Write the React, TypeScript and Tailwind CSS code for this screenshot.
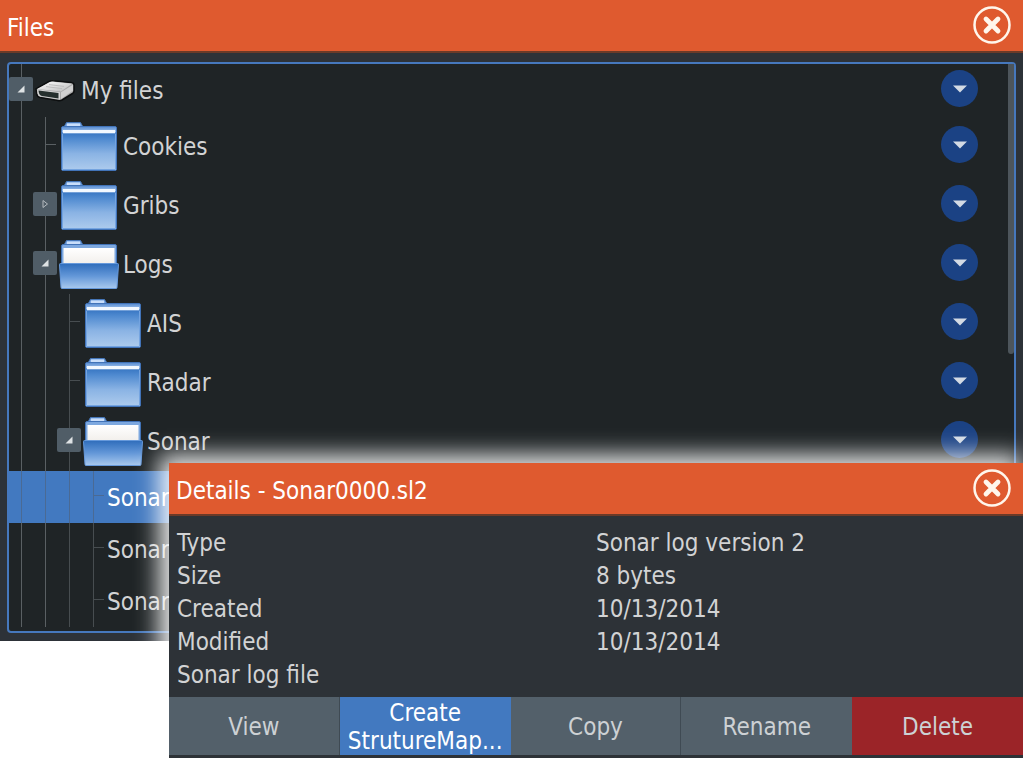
import React from "react";

interface TreeItem {
  id: string;
  label: string;
  depth: number;
  kind: "drive" | "folder" | "openFolder" | "file";
  toggle?: "open" | "closed";
  selected?: boolean;
}

const treeItems: TreeItem[] = [
  { id: "root", label: "My files", depth: 0, kind: "drive", toggle: "open" },
  { id: "cookies", label: "Cookies", depth: 1, kind: "folder" },
  { id: "gribs", label: "Gribs", depth: 1, kind: "folder", toggle: "closed" },
  { id: "logs", label: "Logs", depth: 1, kind: "openFolder", toggle: "open" },
  { id: "ais", label: "AIS", depth: 2, kind: "folder" },
  { id: "radar", label: "Radar", depth: 2, kind: "folder" },
  { id: "sonar", label: "Sonar", depth: 2, kind: "openFolder", toggle: "open" },
  { id: "sonar-0", label: "Sonar", depth: 3, kind: "file", selected: true },
  { id: "sonar-1", label: "Sonar", depth: 3, kind: "file" },
  { id: "sonar-2", label: "Sonar", depth: 3, kind: "file" },
];

const details = [
  { name: "Type", value: "Sonar log version 2" },
  { name: "Size", value: "8 bytes" },
  { name: "Created", value: "10/13/2014" },
  { name: "Modified", value: "10/13/2014" },
];

const rowHeights = {
  drive: "h-[53px]",
  folder: "h-[59px]",
  openFolder: "h-[59px]",
  file: "h-[52px]",
};

// Shared gradients, referenced by id from the icons
function IconDefs() {
  return (
    <svg width="0" height="0" className="absolute" aria-hidden="true">
      <defs>
        <linearGradient id="folderFront" x1="0" y1="0" x2="0" y2="1">
          <stop offset="0" stopColor="#3a78c4" />
          <stop offset="0.15" stopColor="#4f8ad0" />
          <stop offset="0.55" stopColor="#8ab3e4" />
          <stop offset="1" stopColor="#adcbed" />
        </linearGradient>
        <linearGradient id="folderTop" x1="0" y1="0" x2="0" y2="1">
          <stop offset="0" stopColor="#5c8fd2" />
          <stop offset="1" stopColor="#a5c6ef" />
        </linearGradient>
        <linearGradient id="openFront" x1="0" y1="0" x2="0" y2="1">
          <stop offset="0" stopColor="#2f6dbb" />
          <stop offset="0.5" stopColor="#6397d8" />
          <stop offset="1" stopColor="#a9c9ee" />
        </linearGradient>
        <linearGradient id="paper" x1="0" y1="0" x2="0" y2="1">
          <stop offset="0" stopColor="#ffffff" />
          <stop offset="1" stopColor="#f1eeea" />
        </linearGradient>
        <linearGradient id="driveTop" x1="0" y1="0" x2="1" y2="1">
          <stop offset="0" stopColor="#ffffff" />
          <stop offset="1" stopColor="#b9b9b9" />
        </linearGradient>
      </defs>
    </svg>
  );
}

function FolderIcon() {
  return (
    <svg width="60" height="50" viewBox="0 0 60 50" aria-hidden="true">
      <path d="M4.5 6 L7.5 0.5 H21.5 L24.5 6 Z" fill="#7ba7e1" stroke="#4576b8" />
      <path d="M8 3 H21" stroke="#c9defa" strokeWidth="3" />
      <rect x="2.5" y="4.5" width="55" height="44" rx="1.5" fill="url(#folderTop)" stroke="#4173b8" />
      <rect x="3" y="5" width="54" height="5" fill="url(#folderTop)" />
      <rect x="4" y="8" width="52" height="3.5" fill="#f2f8ff" />
      <rect x="3" y="11.5" width="54" height="36.5" fill="url(#folderFront)" />
      <path d="M3.5 12 V47.5 H56.5 V12" fill="none" stroke="#74a4e0" />
    </svg>
  );
}

function OpenFolderIcon() {
  return (
    <svg width="60" height="50" viewBox="0 0 60 50" aria-hidden="true">
      <path d="M4.5 6 L7.5 0.5 H21.5 L24.5 6 Z" fill="#7ba7e1" stroke="#4576b8" />
      <path d="M8 3 H21" stroke="#c9defa" strokeWidth="3" />
      <rect x="2.5" y="4.5" width="55" height="24" rx="1.5" fill="#7da8df" stroke="#4173b8" />
      <rect x="4.5" y="8" width="51" height="17" fill="url(#paper)" />
      <path
        d="M0.5 24.5 Q0.5 23.5 1.5 23.5 H58.5 Q59.5 23.5 59.5 24.5 L58 47.5 Q58 48.5 57 48.5 H3 Q2 48.5 2 47.5 Z"
        fill="url(#openFront)"
        stroke="#6699db"
      />
    </svg>
  );
}

function DriveIcon() {
  return (
    <svg width="42" height="26" viewBox="0 0 42 26" aria-hidden="true">
      <path
        d="M1 11 L14 3.5 Q16 2.5 18 2.8 L36 4.6 Q39 5 39 7 V13 Q39 14.5 37.5 15.5 L27 22 Q25 23 23 22.5 L5 19.5 Q2.5 19 2 17 Z"
        fill="#a9a9a9"
        stroke="#0c0e0f"
        strokeWidth="1.5"
      />
      <path d="M2 11 L15 4 Q16 3.5 18 3.7 L37 5.8 L26 13.5 Z" fill="url(#driveTop)" />
      <path d="M2 11.2 L25 14.2 V21.5 L6 18.6 Q3 18 2.6 15.5 Z" fill="#d6d6d6" />
      <path d="M3.5 12.4 L23.5 15 V20.4 L7 18 Q4 17.5 3.5 12.4 Z" fill="#26302e" />
      <path d="M26 14.3 L38 6.8 V12.5 L26 21 Z" fill="#d0d0d0" />
      <path d="M14 6.6 L29 8.4 M11 8.6 L27 10.6" stroke="#bdbdbd" />
    </svg>
  );
}

function CloseButton({ label }: { label: string }) {
  return (
    <button type="button" aria-label={label} className="mb-0.5 shrink-0">
      <svg width="38" height="38" viewBox="0 0 38 38" fill="none" stroke="#fff6ec">
        <circle cx="19" cy="19" r="17.5" strokeWidth="2.5" />
        <path d="M13 13 L25 25 M25 13 L13 25" strokeWidth="4.8" strokeLinecap="round" />
      </svg>
    </button>
  );
}

function TitleBar({ title, closeLabel }: { title: string; closeLabel: string }) {
  return (
    <header className="flex h-[53px] items-center justify-between border-b-2 border-[#6b3a28] bg-[#df5a2f] pr-3 pl-[7px]">
      <h2 className="pt-1.5 text-white">{title}</h2>
      <CloseButton label={closeLabel} />
    </header>
  );
}

function ToggleButton({ state, label }: { state: "open" | "closed"; label: string }) {
  return (
    <button
      type="button"
      aria-label={`${state === "open" ? "Collapse" : "Expand"} ${label}`}
      className="relative mb-1 flex size-6 items-center justify-center rounded-xs bg-[#505d67]"
    >
      <svg width="10" height="10" viewBox="0 0 10 10">
        {state === "open" ? (
          <path d="M8.5 1.5 V8.5 H1.5 Z" fill="#dfe3e5" />
        ) : (
          <path d="M3 1.5 L7.5 5 L3 8.5 Z" fill="none" stroke="#b4babe" />
        )}
      </svg>
    </button>
  );
}

function GuideCell({ item, level }: { item: TreeItem; level: number }) {
  const own = level === item.depth;
  const lineColor = level < 2 ? "bg-[#5a6063]" : "bg-[#474d50]";
  const color = item.selected ? "bg-[#4a6a94]" : lineColor;
  return (
    <div className="relative flex w-6 shrink-0 items-center self-stretch">
      <div className={`absolute inset-y-0 left-3 w-px ${color}`}></div>
      {own && item.toggle && <ToggleButton state={item.toggle} label={item.label} />}
      {own && !item.toggle && <div className={`mb-1 ml-3 h-px w-[11px] ${color}`}></div>}
    </div>
  );
}

function TreeRow({ item }: { item: TreeItem }) {
  const levels = Array.from({ length: item.depth + 1 }, (_, i) => i);
  return (
    <li
      className={`flex items-center pr-[30px] ${rowHeights[item.kind]} ${
        item.selected ? "bg-[#4279c0] text-white" : "text-[#d2d3d4]"
      }`}
    >
      {levels.map((level) => (
        <GuideCell key={level} item={item} level={level} />
      ))}
      <div className="flex flex-1 items-center gap-1 pl-0.5">
        {item.kind === "drive" && <DriveIcon />}
        {item.kind === "folder" && <FolderIcon />}
        {item.kind === "openFolder" && <OpenFolderIcon />}
        <span className="pt-0.5">{item.label}</span>
      </div>
      {item.kind !== "file" && (
        <button
          type="button"
          aria-label={`${item.label} options`}
          className="mb-1 flex size-[37px] items-center justify-center rounded-full bg-[#1b4284]"
        >
          <svg width="14" height="8" viewBox="0 0 14 8">
            <path d="M0 0.5 H14 L7 7.5 Z" fill="#d3dae4" />
          </svg>
        </button>
      )}
    </li>
  );
}

function DetailsDialog() {
  return (
    <section
      role="dialog"
      aria-label="Details"
      className="absolute top-[463px] right-0 left-[169px] bg-[#2d3237] pb-[3px] shadow-[-6px_-4px_22px_4px_rgba(255,255,255,0.9)]"
    >
      <TitleBar title="Details - Sonar0000.sl2" closeLabel="Close details" />
      <div className="px-2 pt-[11px] pb-[5px] leading-[33px] text-[#d2d3d4]">
        <dl>
          {details.map((row) => (
            <div key={row.name} className="grid grid-cols-2">
              <dt>{row.name}</dt>
              <dd>{row.value}</dd>
            </div>
          ))}
        </dl>
        <p>Sonar log file</p>
      </div>
      <div className="grid h-[58px] grid-cols-5 leading-7 text-[#cdd1d4]">
        <button type="button" className="border-r border-[#3f4a53] bg-[#53606a] pt-0.5">
          View
        </button>
        <button type="button" className="bg-[#4279c0] pt-0.5 text-white">
          Create
          <br />
          StrutureMap...
        </button>
        <button type="button" className="border-r border-[#3f4a53] bg-[#53606a] pt-0.5">
          Copy
        </button>
        <button type="button" className="bg-[#53606a] pt-0.5">
          Rename
        </button>
        <button type="button" className="bg-[#9b2428] pt-0.5">
          Delete
        </button>
      </div>
    </section>
  );
}

export default function App() {
  return (
    <main className="relative min-h-screen overflow-hidden bg-white font-['DejaVu_Sans_Condensed','Noto_Sans',sans-serif] text-[24px] leading-[29px]">
      <IconDefs />
      <section className="bg-[#2d3238]">
        <TitleBar title="Files" closeLabel="Close files" />
        <div className="px-[7px] pt-[9px] pb-2">
          <div className="flex rounded-sm border-2 border-[#4678bd] bg-[#1f2426]">
            <ul className="flex-1 pb-1">
              {treeItems.map((item) => (
                <TreeRow key={item.id} item={item} />
              ))}
            </ul>
            <div className="h-[290px] w-[6px] rounded-b-sm bg-[#4d555b]"></div>
          </div>
        </div>
      </section>
      <DetailsDialog />
    </main>
  );
}
